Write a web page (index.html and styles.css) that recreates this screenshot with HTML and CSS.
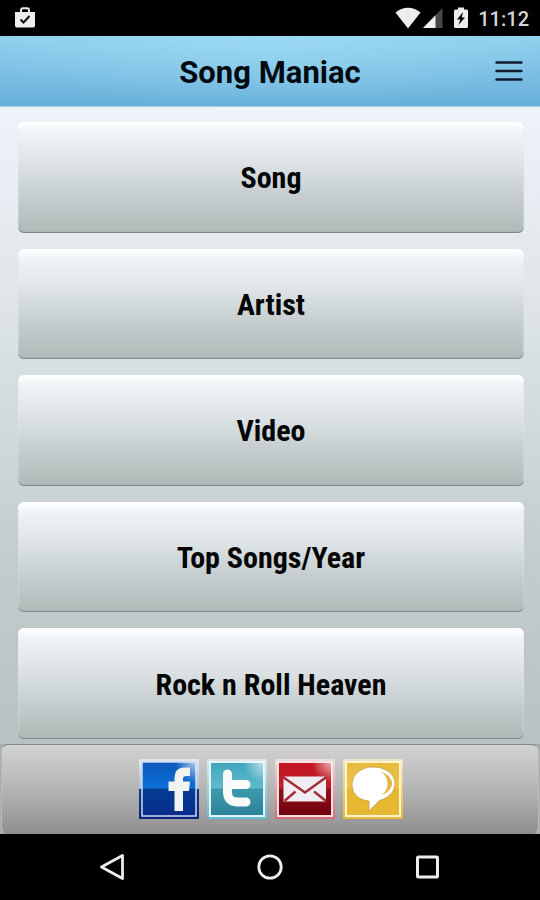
FILE: index.html
```html
<!DOCTYPE html>
<html lang="en">
<head>
<meta charset="utf-8">
<meta name="viewport" content="width=device-width, initial-scale=1">
<title>Song Maniac</title>
<link rel="stylesheet" href="styles.css">
</head>
<body>
<div class="status">
  <svg class="status-bag" width="22" height="22" viewBox="0 0 22 22" aria-hidden="true">
    <path d="M7 6V3.5Q7 1.200 9 1.200H13Q15 1.200 15 3.500V6" fill="none" stroke="#ededed" stroke-width="2"/>
    <path d="M1 5H21V18.500Q21 20.500 19 20.500H3Q1 20.500 1 18.500Z" fill="#ededed"/>
    <path d="M6.500 12.500L9.500 15.500L15.500 9" fill="none" stroke="#111" stroke-width="2"/>
  </svg>
  <div class="status-right">
    <svg class="status-wifi" width="26" height="22" viewBox="0 0 26 22" aria-hidden="true"><path d="M0.500 5.500Q6 0.800 13 0.800T25.500 5.500L13 21.500Z" fill="#ededed"/></svg>
    <svg class="status-signal" width="20" height="22" viewBox="0 0 20 22" aria-hidden="true"><path d="M19.500 1V21H0Z" fill="#484848"/><path d="M12.500 8.200V21H0Z" fill="#f0f0f0"/></svg>
    <svg class="status-battery" width="14" height="22" viewBox="0 0 14 22" aria-hidden="true"><path d="M4 0.500H10V2.500H12.500Q14 2.500 14 4V19.500Q14 21 12.500 21H1.500Q0 21 0 19.500V4Q0 2.500 1.500 2.500H4Z" fill="#ededed"/><path d="M9 5L3 12.500H6.300L4.500 18L11 10.500H7.800Z" fill="#050505"/></svg>
    <span class="clock">11:12</span>
  </div>
</div>
<header class="header">
  <h1 class="title">Song Maniac</h1>
  <button class="menu" type="button" aria-label="Menu">
    <svg width="28" height="22" viewBox="0 0 28 22" aria-hidden="true"><path d="M1.500 2.500H26.500M1.500 11H26.500M1.500 19.500H26.500" stroke="#101a30" stroke-width="2.400" stroke-linecap="round"/></svg>
  </button>
</header>
<main class="list">
  <button class="item" type="button">Song</button>
  <button class="item" type="button">Artist</button>
  <button class="item" type="button">Video</button>
  <button class="item" type="button">Top Songs/Year</button>
  <button class="item" type="button">Rock n Roll Heaven</button>
</main>
<div class="dock">
<footer class="share">
  <a href="#facebook" aria-label="Facebook">
    <svg width="60" height="60" viewBox="0 0 60 60" aria-hidden="true">
      <defs>
        <linearGradient id="fb" x2="0" y2="1"><stop offset="0" stop-color="#0c58bd"/><stop offset=".48" stop-color="#0d6fd6"/><stop offset=".5" stop-color="#043d91"/><stop offset="1" stop-color="#0a2a8c"/></linearGradient>
        <linearGradient id="fbe" x2="0" y2="1"><stop offset="0" stop-color="#e4e8ee"/><stop offset=".49" stop-color="#aebfd6"/><stop offset=".5" stop-color="#173a80"/><stop offset="1" stop-color="#0b237a"/></linearGradient>
        <radialGradient id="shine" cx="1" cy="0" r=".38"><stop offset="0" stop-color="#fff" stop-opacity=".7"/><stop offset="1" stop-color="#fff" stop-opacity="0"/></radialGradient>
      </defs>
      <rect width="60" height="60" rx="1" fill="url(#fbe)"/>
      <rect x="3" y="3" width="54" height="54" fill="url(#fb)" stroke="#c9dcf4" stroke-width="1.500"/>
      <rect x="3" y="3" width="54" height="54" fill="url(#shine)"/>
      <path d="M35.500 52V32H29.500V22.500H35.500V19Q35.500 8.500 45 8.500H51V17H47Q44 17 44 20V22.500H51L50 32H44V52Z" fill="#f2f2f2"/>
    </svg>
  </a>
  <a href="#twitter" aria-label="Twitter">
    <svg width="60" height="60" viewBox="0 0 60 60" aria-hidden="true">
      <defs><linearGradient id="tw" x2="0" y2="1"><stop offset="0" stop-color="#3fa5bd"/><stop offset=".48" stop-color="#61bacd"/><stop offset=".5" stop-color="#3c9aab"/><stop offset="1" stop-color="#2c8199"/></linearGradient>
      <linearGradient id="twe" x2="0" y2="1"><stop offset="0" stop-color="#dde7e9"/><stop offset=".5" stop-color="#a2d2dc"/><stop offset="1" stop-color="#65bad6"/></linearGradient></defs>
      <rect width="60" height="60" rx="1" fill="url(#twe)"/>
      <rect x="3" y="3" width="54" height="54" fill="url(#tw)" stroke="#e5f7fb" stroke-width="2"/>
      <rect x="3" y="3" width="54" height="54" fill="url(#shine)"/>
      <path d="M20.500 15V33Q20.500 43 31 43H39M21 25.500H39" fill="none" stroke="#fafafa" stroke-width="9" stroke-linecap="round"/>
    </svg>
  </a>
  <a href="#email" aria-label="Email">
    <svg width="60" height="60" viewBox="0 0 60 60" aria-hidden="true">
      <defs><linearGradient id="ml" x2="0" y2="1"><stop offset="0" stop-color="#c4131f"/><stop offset=".48" stop-color="#bd202c"/><stop offset=".5" stop-color="#8f111b"/><stop offset="1" stop-color="#70000c"/></linearGradient>
      <linearGradient id="mle" x2="0" y2="1"><stop offset="0" stop-color="#eedede"/><stop offset=".49" stop-color="#dda9ad"/><stop offset="1" stop-color="#d66b75"/></linearGradient></defs>
      <rect width="60" height="60" rx="1" fill="url(#mle)"/>
      <rect x="3" y="3" width="54" height="54" fill="url(#ml)" stroke="#f6dfe1" stroke-width="2"/>
      <rect x="3" y="3" width="54" height="54" fill="url(#shine)"/>
      <rect x="8.500" y="17.500" width="42.500" height="25" fill="#f0edf2"/>
      <path d="M8 18L30 33.500L51.500 18M9.500 42L20.500 32.500M51 42L39 32.500" fill="none" stroke="#a12c37" stroke-width="2.400"/>
    </svg>
  </a>
  <a href="#sms" aria-label="Text message">
    <svg width="60" height="60" viewBox="0 0 60 60" aria-hidden="true">
      <defs><linearGradient id="ch" x2="0" y2="1"><stop offset="0" stop-color="#e6bb3d"/><stop offset=".48" stop-color="#edc34a"/><stop offset=".5" stop-color="#e6b830"/><stop offset="1" stop-color="#e6b834"/></linearGradient>
      <linearGradient id="che" x2="0" y2="1"><stop offset="0" stop-color="#eee5ca"/><stop offset="1" stop-color="#e8b92f"/></linearGradient></defs>
      <rect width="60" height="60" rx="1" fill="url(#che)"/>
      <rect x="3" y="3" width="54" height="54" fill="url(#ch)" stroke="#fff4cd" stroke-width="2"/>
      <path d="M30 8C43 8 52 15 52 24.500C52 34 44 39.500 36.500 41.500L26 52V42C15 41 9 34.500 9 25.500C9 15.500 18 8 30 8Z" fill="#fff" stroke="#c79b43" stroke-width=".8"/>
      <path d="M37.500 12.500Q50 17 49 26Q47 33 39 36Q44.500 31 44.500 24.500Q44.500 17 37.500 12.500Z" fill="#e5b744"/>
    </svg>
  </a>
</footer>
</div>
<nav class="system" aria-label="System navigation">
  <button type="button" aria-label="Back"><svg width="28" height="28" viewBox="0 0 28 28" aria-hidden="true"><path d="M23.500 2.500V25.500L2.500 14Z" fill="none" stroke="#ededed" stroke-width="2.800" stroke-linejoin="round"/></svg></button>
  <button type="button" aria-label="Home"><svg width="28" height="28" viewBox="0 0 28 28" aria-hidden="true"><circle cx="14" cy="14" r="11.200" fill="none" stroke="#ededed" stroke-width="2.800"/></svg></button>
  <button type="button" aria-label="Recent apps"><svg width="28" height="28" viewBox="0 0 28 28" aria-hidden="true"><rect x="4.500" y="4" width="20" height="20" rx="1" fill="none" stroke="#ededed" stroke-width="3"/></svg></button>
</nav>
</body>
</html>
```

FILE: styles.css
```css
* { box-sizing: border-box; }
html, body { height: 100%; }
body {
  margin: 0;
  min-height: 700px;
  display: flex;
  flex-direction: column;
  background: #000;
  font-family: Roboto, "Liberation Sans", sans-serif;
}
button { border: 0; padding: 0; background: none; font: inherit; color: inherit; cursor: pointer; }
svg { display: block; }

.status {
  flex: none;
  height: 36px;
  padding: 0 11px 0 14px;
  display: flex;
  align-items: center;
  justify-content: space-between;
}
.status-right { display: flex; align-items: center; }
.status-wifi { margin-right: 2px; }
.status-signal { margin-right: 11px; }
.status-battery { margin-right: 10px; }
.clock { color: #d4d4d4; font-size: 20px; line-height: 24px; font-weight: 500; padding-top: 2px; }

.header {
  flex: none;
  height: 71px;
  padding: 0 16px;
  display: grid;
  grid-template-columns: 1fr auto 1fr;
  align-items: center;
  background:
    radial-gradient(ellipse 60% 100% at 50% 0, rgba(166, 226, 248, .6), rgba(166, 226, 248, 0)),
    linear-gradient(#8fcfed, #68b0da);
  border-bottom: 1px solid #a5cde4;
}
.title { grid-column: 2; margin: 0; font-size: 31px; line-height: 36px; font-weight: 700; color: #020a10; padding-top: 4px; }
.menu { grid-column: 3; justify-self: end; width: 32px; height: 32px; display: grid; place-items: center; margin-right: -2px; padding-right: 2px; }

.list {
  flex: 1;
  min-height: 0;
  padding: 15px 16px 5px 18px;
  display: flex;
  flex-direction: column;
  gap: 16px;
  background: linear-gradient(#edf3f9, #dfe5e8 30%, #c2cccd 72%, #b7c2c3);
}
.item {
  flex: 1;
  padding-top: 2px;
  border-radius: 6px;
  background: linear-gradient(#fff, #edf3f7 10%, #dde3e5 38%, #c3cbcc 70%, #b0b9b8);
  box-shadow: inset 0 3px 2px #fff, inset 0 -1px 1px #7c8688;
  color: #050505;
  font-family: "Liberation Sans Narrow", "Roboto Condensed", "Liberation Sans", sans-serif;
  font-size: 30px;
  line-height: 36px;
  font-weight: 700;
}

.dock { flex: none; background: #a5adae; }
.share {
  height: 90px;
  border: 1px solid #858b8c;
  border-left-color: #b9bdbd;
  border-right-color: #b9bdbd;
  border-radius: 7px;
  margin: 0 1px;
  padding-left: 1px;
  display: flex;
  align-items: center;
  justify-content: center;
  gap: 8px;
  background: linear-gradient(#d2d2d2, #b8b8b8 45%, #909090);
}

.system { flex: none; height: 66px; display: flex; align-items: center; justify-content: center; gap: 129px; }
.system button { width: 28px; height: 28px; }
```
